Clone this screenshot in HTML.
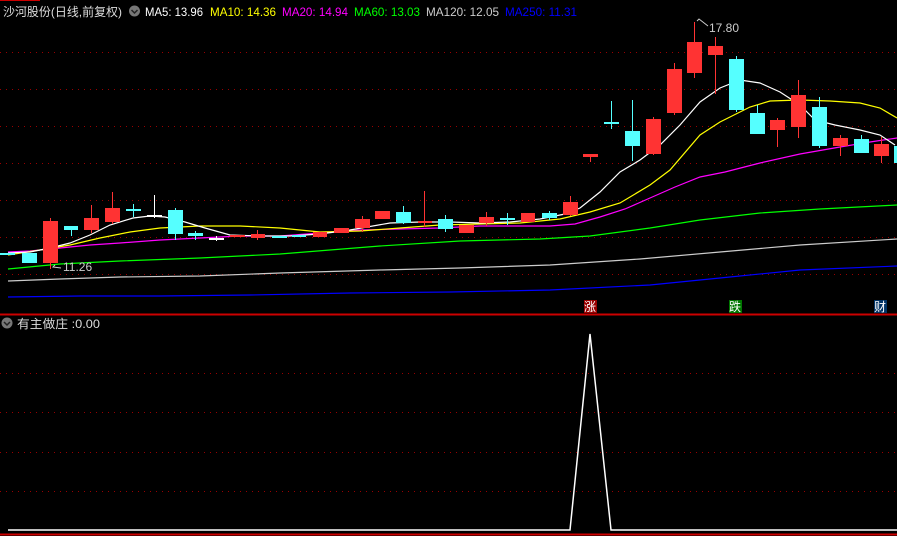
<!DOCTYPE html>
<html><head><meta charset="utf-8"><style>
html,body{margin:0;padding:0;background:#000;width:897px;height:536px;overflow:hidden}
svg{display:block}
text{font-family:"Liberation Sans","Noto Sans CJK SC",sans-serif;font-size:12px}
</style></head><body>
<svg width="897" height="536" viewBox="0 0 897 536" xmlns="http://www.w3.org/2000/svg">
<rect width="897" height="536" fill="#000"/>
<g stroke="#900" stroke-width="1" stroke-dasharray="1,5">
<line x1="0" y1="52.5" x2="897" y2="52.5"/><line x1="0" y1="89.5" x2="897" y2="89.5"/>
<line x1="0" y1="126.5" x2="897" y2="126.5"/><line x1="0" y1="163.5" x2="897" y2="163.5"/>
<line x1="0" y1="200.5" x2="897" y2="200.5"/><line x1="0" y1="237.5" x2="897" y2="237.5"/>
<line x1="0" y1="274.5" x2="897" y2="274.5"/>
<line x1="0" y1="373.5" x2="897" y2="373.5"/><line x1="0" y1="412.5" x2="897" y2="412.5"/>
<line x1="0" y1="452.5" x2="897" y2="452.5"/><line x1="0" y1="491.5" x2="897" y2="491.5"/>
</g>
<line x1="0" y1="314.5" x2="897" y2="314.5" stroke="#c00" stroke-width="2"/>
<line x1="0" y1="534.5" x2="897" y2="534.5" stroke="#c00" stroke-width="2"/>
<line x1="0" y1="0.5" x2="40" y2="0.5" stroke="#c00"/>
<g fill="none" stroke-width="1.2">
<polyline stroke="#00f" points="8,297 80,296 160,296 250,295 350,293 450,292 550,290 650,285 720,278 800,270 897,266"/>
<polyline stroke="#ccc" points="8,281 60,279 120,277 200,276 280,273 380,270 460,268 550,265 640,259 720,252 800,245 897,239"/>
<polyline stroke="#0f0" points="8,269 60,264 120,261 200,258 280,254 380,246 460,241 540,239 590,236 650,228 700,220 760,213 820,209 897,205"/>
<polyline stroke="#f0f" points="8,252 30,251 60,248 90,245 120,243 160,240 200,238 240,236 280,236 320,233 360,230 400,229 440,228 480,226 520,226 550,226 575,224 600,217 625,209 650,198 675,187 700,177 725,172 760,163 800,154 840,147 870,142 897,138"/>
<polyline stroke="#ff0" points="8,255 40,250 70,245 100,238 130,232 160,228 200,226 240,226 280,228 320,232 360,231 400,228 440,225 480,224 520,223 560,219 590,212 620,203 650,185 670,170 700,135 720,122 750,107 770,101 800,100 830,101 860,103 880,108 897,118"/>
<polyline stroke="#fff" points="8,253 30,252 50,248 70,243 90,235 110,225 133,218 150,216 165,217 185,222 205,228 230,235 260,236 290,236 320,234 350,230 390,223 420,222 450,222 480,223 510,222 540,219 565,214 580,208 600,192 620,172 640,160 660,145 680,125 700,102 720,88 740,80 760,83 780,92 800,105 815,120 835,125 860,130 880,135 895,145"/>
</g>
<g stroke-width="1">
<g stroke="#f33">
<line x1="50.5" y1="218" x2="50.5" y2="269"/><line x1="91.5" y1="205" x2="91.5" y2="233"/><line x1="112.5" y1="192" x2="112.5" y2="224"/>
<line x1="257.5" y1="230" x2="257.5" y2="240"/><line x1="362.5" y1="216" x2="362.5" y2="232"/><line x1="424.5" y1="191" x2="424.5" y2="227"/>
<line x1="486.5" y1="212" x2="486.5" y2="226"/><line x1="570.5" y1="196" x2="570.5" y2="216"/><line x1="590.5" y1="154" x2="590.5" y2="162"/>
<line x1="653.5" y1="117" x2="653.5" y2="155"/><line x1="674.5" y1="63" x2="674.5" y2="115"/><line x1="694.5" y1="22" x2="694.5" y2="78"/>
<line x1="715.5" y1="37" x2="715.5" y2="94"/><line x1="777.5" y1="118" x2="777.5" y2="147"/><line x1="798.5" y1="80" x2="798.5" y2="138"/>
<line x1="840.5" y1="135" x2="840.5" y2="156"/><line x1="881.5" y1="137" x2="881.5" y2="163"/>
</g>
<g stroke="#5ff">
<line x1="71.5" y1="226" x2="71.5" y2="236"/><line x1="133.5" y1="204" x2="133.5" y2="217"/><line x1="175.5" y1="208" x2="175.5" y2="240"/>
<line x1="195.5" y1="231" x2="195.5" y2="240"/><line x1="403.5" y1="206" x2="403.5" y2="224"/><line x1="445.5" y1="215" x2="445.5" y2="232"/>
<line x1="507.5" y1="213" x2="507.5" y2="225"/><line x1="549.5" y1="211" x2="549.5" y2="220"/><line x1="611.5" y1="101" x2="611.5" y2="129"/>
<line x1="632.5" y1="100" x2="632.5" y2="161"/><line x1="736.5" y1="56" x2="736.5" y2="112"/><line x1="757.5" y1="105" x2="757.5" y2="134"/>
<line x1="819.5" y1="97" x2="819.5" y2="148"/><line x1="861.5" y1="135" x2="861.5" y2="153"/>
</g>
<g stroke="#fff"><line x1="154.5" y1="195" x2="154.5" y2="218"/><line x1="216.5" y1="236" x2="216.5" y2="241"/></g>
</g>
<g fill="#f33">
<rect x="43" y="221" width="15" height="42"/><rect x="84" y="218" width="15" height="12"/><rect x="105" y="208" width="15" height="14"/>
<rect x="230" y="235" width="15" height="2"/><rect x="251" y="234" width="14" height="4"/><rect x="313" y="232" width="14" height="5"/>
<rect x="334" y="228" width="15" height="5"/><rect x="355" y="219" width="15" height="9"/><rect x="375" y="211" width="15" height="8"/>
<rect x="418" y="221" width="14" height="2"/><rect x="459" y="225" width="15" height="8"/><rect x="479" y="217" width="15" height="6"/>
<rect x="521" y="213" width="14" height="9"/><rect x="563" y="202" width="15" height="13"/><rect x="583" y="154" width="15" height="3"/>
<rect x="646" y="119" width="15" height="35"/><rect x="667" y="69" width="15" height="44"/><rect x="687" y="42" width="15" height="31"/>
<rect x="708" y="46" width="15" height="9"/><rect x="770" y="120" width="15" height="10"/><rect x="791" y="95" width="15" height="32"/>
<rect x="833" y="138" width="15" height="8"/><rect x="874" y="144" width="15" height="12"/>
</g>
<g fill="#5ff">
<rect x="0" y="253" width="15" height="2"/><rect x="22" y="253" width="15" height="10"/><rect x="64" y="226" width="14" height="4"/>
<rect x="126" y="209" width="15" height="2"/><rect x="168" y="210" width="15" height="24"/><rect x="188" y="233" width="15" height="3"/>
<rect x="272" y="236" width="15" height="2"/><rect x="292" y="235" width="14" height="2"/><rect x="396" y="212" width="15" height="11"/>
<rect x="438" y="219" width="15" height="10"/><rect x="500" y="218" width="15" height="2"/><rect x="542" y="213" width="15" height="5"/>
<rect x="604" y="122" width="15" height="2"/><rect x="625" y="131" width="15" height="15"/><rect x="729" y="59" width="15" height="51"/>
<rect x="750" y="113" width="15" height="21"/><rect x="812" y="107" width="15" height="39"/><rect x="854" y="139" width="15" height="14"/>
<rect x="894" y="146" width="3" height="17"/>
</g>
<g fill="#fff"><rect x="147" y="215" width="15" height="2"/><rect x="209" y="238" width="15" height="2"/></g>
<text x="709" y="32" fill="#ccc">17.80</text>
<polyline points="697,21 699,19 708,26" fill="none" stroke="#ccc"/>
<text x="63" y="271" fill="#ccc">11.26</text>
<polyline points="55,265 53,267 61,268" fill="none" stroke="#ccc"/>
<rect x="584" y="300" width="13" height="13" fill="#900"/><text x="584" y="311" fill="#fff">涨</text>
<rect x="729" y="300" width="13" height="13" fill="#070"/><text x="729" y="311" fill="#fff">跌</text>
<rect x="874" y="300" width="13" height="13" fill="#036"/><text x="874" y="311" fill="#fff">财</text>
<text x="3" y="16" fill="#ddd" textLength="119" lengthAdjust="spacingAndGlyphs">沙河股份(日线,前复权)</text>
<circle cx="134.5" cy="11" r="5.5" fill="#777"/><polyline points="131.5,10 134.5,13 137.5,10" fill="none" stroke="#222" stroke-width="1.5"/>
<text x="145" y="16" fill="#fff" textLength="58" lengthAdjust="spacingAndGlyphs">MA5: 13.96</text>
<text x="210" y="16" fill="#ff0" textLength="66" lengthAdjust="spacingAndGlyphs">MA10: 14.36</text>
<text x="282" y="16" fill="#f0f" textLength="66" lengthAdjust="spacingAndGlyphs">MA20: 14.94</text>
<text x="354" y="16" fill="#0f0" textLength="66" lengthAdjust="spacingAndGlyphs">MA60: 13.03</text>
<text x="426" y="16" fill="#ccc" textLength="73" lengthAdjust="spacingAndGlyphs">MA120: 12.05</text>
<text x="505" y="16" fill="#00f" textLength="72" lengthAdjust="spacingAndGlyphs">MA250: 11.31</text>
<circle cx="7" cy="323" r="5.5" fill="#777"/><polyline points="4,322 7,325 10,322" fill="none" stroke="#222" stroke-width="1.5"/>
<text x="17" y="328" fill="#ddd" textLength="83" lengthAdjust="spacingAndGlyphs">有主做庄 :0.00</text>
<polyline points="8,530 570,530 590,334 611,530 897,530" fill="none" stroke="#fff" stroke-width="1.5"/>
</svg>
</body></html>
